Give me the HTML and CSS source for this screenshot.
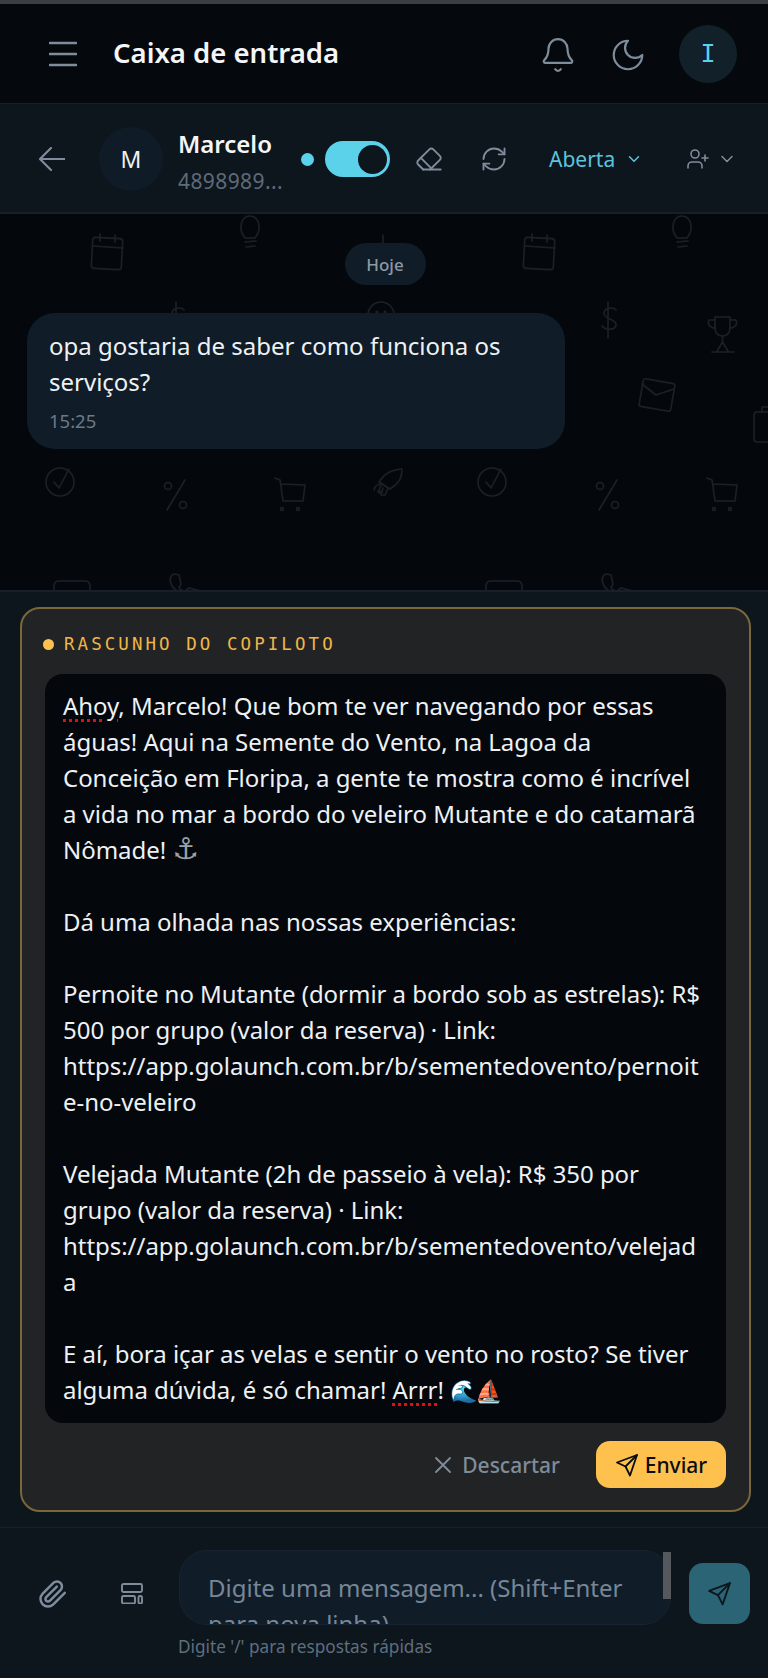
FILE: index.html
```
<!DOCTYPE html>
<html lang="pt-BR">
<head>
<meta charset="utf-8">
<title>Caixa de entrada</title>
<link rel="stylesheet" href="styles.css">
</head>
<body>
<div class="app">
  <header class="topbar">
    <div class="topbar-left">
      <svg class="ic-menu" viewBox="0 0 28 26" fill="none" stroke="currentColor" stroke-width="2.6" stroke-linecap="round"><path d="M1 2h26M1 13h26M1 24h26"/></svg>
      <h1 class="title">Caixa de entrada</h1>
    </div>
    <div class="topbar-right">
      <svg class="ic ic-36" viewBox="0 0 24 24"><path d="M10.268 21a2 2 0 0 0 3.464 0"/><path d="M3.262 15.326A1 1 0 0 0 4 17h16a1 1 0 0 0 .74-1.673C19.41 13.956 18 12.499 18 8A6 6 0 0 0 6 8c0 4.499-1.411 5.956-2.738 7.326"/></svg>
      <svg class="ic ic-36" viewBox="0 0 24 24"><path d="M12 3a6 6 0 0 0 9 9 9 9 0 1 1-9-9Z"/></svg>
      <div class="avatar-me">I</div>
    </div>
  </header>

  <section class="convbar">
    <svg class="ic ic-back" viewBox="0 0 26 24"><path d="M12 1 1 12l11 11M1 12h25"/></svg>
    <div class="avatar-contact">M</div>
    <div class="contact">
      <div class="contact-name">Marcelo</div>
      <div class="contact-phone">4898989...</div>
    </div>
    <span class="dot"></span>
    <span class="toggle"><span class="knob"></span></span>
    <svg class="ic ic-24 gap-eraser" viewBox="0 0 24 24"><path d="m7 21-4.3-4.3c-1-1-1-2.5 0-3.4l9.6-9.6c1-1 2.5-1 3.4 0l5.6 5.6c1 1 1 2.5 0 3.4L13 21"/><path d="M22 21H7"/><path d="m5 11 9 9"/></svg>
    <svg class="ic ic-24 gap-refresh" viewBox="0 0 24 24"><path d="M3 12a9 9 0 0 1 9-9 9.75 9.75 0 0 1 6.74 2.74L21 8"/><path d="M21 3v5h-5"/><path d="M21 12a9 9 0 0 1-9 9 9.75 9.75 0 0 1-6.74-2.74L3 16"/><path d="M8 16H3v5"/></svg>
    <span class="status">Aberta</span>
    <svg class="ic ic-chev-cyan" viewBox="0 0 24 24"><path d="m6 9 6 6 6-6"/></svg>
    <svg class="ic ic-user" viewBox="0 0 24 24"><path d="M16 21v-2a4 4 0 0 0-4-4H6a4 4 0 0 0-4 4v2"/><circle cx="9" cy="7" r="4"/><path d="M19 8v6"/><path d="M22 11h-6"/></svg>
    <svg class="ic ic-chev" viewBox="0 0 24 24"><path d="m6 9 6 6 6-6"/></svg>
  </section>

  <main class="chat">
    <svg class="chat-bg" width="768" height="376" aria-hidden="true">
      <defs>
        <pattern id="doodles" width="432" height="376" patternUnits="userSpaceOnUse">
          <g transform="translate(0,-214)" fill="none" stroke="#1b2027" stroke-width="1.6" stroke-linecap="round" stroke-linejoin="round">
            <g transform="translate(92,234)"><rect x="0" y="4" width="30" height="31" rx="3" transform="rotate(3 15 20)"/><path d="M1 12l30 2M8 0l0 7M23 1l0 7"/></g>
            <g transform="translate(240,214)"><path d="M5 24C-3 14 2 2 10 2s13 12 5 22zM5 28l11-1M6 33l9-1"/></g>
            <path d="M383 235v8"/>
            <g transform="translate(168,302)"><path d="M8 0v36M16 8c-2-3-11-3-12 3s13 6 12 12-11 5-14 1"/></g>
            <g transform="translate(368,302)"><circle cx="13" cy="13" r="13"/><circle cx="9" cy="10" r=".8"/><circle cx="17" cy="10" r=".8"/></g>
            <g transform="translate(274,317)"><path d="M9 0h15v10c0 6-3 9-7.500 9S9 16 9 10zM9 3H3c-2 4 1 8 6 8M24 3h6c2 4-1 8-6 8M16.500 19v6l-6 10h12l-6-10M6 35h22"/></g>
            <g transform="translate(209,381)"><rect x="0" y="0" width="32" height="28" rx="2" transform="rotate(10 16 14)"/><path d="M1 3l14 11 18-6"/></g>
            <g transform="translate(322,406)"><rect x="0" y="6" width="28" height="30" rx="3"/><path d="M8 6V1h12v5"/></g>
            <g transform="translate(46,467)"><circle cx="14" cy="15" r="14"/><path d="M8 15l5 6 10-19"/></g>
            <g transform="translate(164,480)"><path d="M3 30 21 0"/><circle cx="4" cy="6" r="3.500"/><circle cx="19" cy="25" r="3.500"/></g>
            <g transform="translate(274,478)"><path d="M1 0l5 2 3 21h20l2-16-24-1"/><circle cx="8" cy="31" r="1.500"/><circle cx="24" cy="31" r="1.500"/></g>
            <g transform="translate(373,468)"><path d="M6 14C12 5 18 2 29 1c0 10-4 15-12 20zM1 22c1-4 3-6 7-6M6 22l3-7-3 7c-2 2-1 3 2 3zM10 20l-2 7h4l3-7"/></g>
            <g transform="translate(54,581)"><path d="M0 30V5q0-5 5-5h26q5 0 5 5v25"/></g>
            <g transform="translate(169,573)"><path d="M5 1C1 2 0 8 3 13c2 3 5 5 8 7M5 1l5 1 2 9-2 4c2 2 4 3 6 3l4-3 12 3"/></g>
          </g>
        </pattern>
      </defs>
      <rect width="768" height="376" fill="url(#doodles)"/>
    </svg>
    <div class="day-row"><span class="day">Hoje</span></div>
    <div class="bubble">
      <p class="bubble-text">opa gostaria de saber como funciona os<br>serviços?</p>
      <div class="bubble-time">15:25</div>
    </div>
  </main>

  <section class="composer">
    <div class="draft">
      <div class="draft-head"><span class="draft-dot"></span><span class="draft-label">RASCUNHO DO COPILOTO</span></div>
      <div class="draft-text"><span class="misspelt">Ahoy</span>, Marcelo! Que bom te ver navegando por essas<br>águas! Aqui na Semente do Vento, na Lagoa da<br>Conceição em Floripa, a gente te mostra como é incrível<br>a vida no mar a bordo do veleiro Mutante e do catamarã<br>Nômade! <span class="anchor">⚓&#xFE0E;</span><br><br>Dá uma olhada nas nossas experiências:<br><br>Pernoite no Mutante (dormir a bordo sob as estrelas): R$<br>500 por grupo (valor da reserva) · Link:<br>https://app.golaunch.com.br/b/sementedovento/pernoit<br>e-no-veleiro<br><br>Velejada Mutante (2h de passeio à vela): R$ 350 por<br>grupo (valor da reserva) · Link:<br>https://app.golaunch.com.br/b/sementedovento/velejad<br>a<br><br>E aí, bora içar as velas e sentir o vento no rosto? Se tiver<br>alguma dúvida, é só chamar! <span class="misspelt">Arrr</span>! <span class="emoji">🌊⛵</span></div>
      <div class="draft-actions">
        <button class="btn-discard"><svg class="ic ic-x" viewBox="0 0 18 18"><path d="M2 2l14 14M16 2 2 16"/></svg>Descartar</button>
        <button class="btn-send"><svg class="ic ic-plane" viewBox="0 0 24 24"><path d="M22 2 2 9.500l8.500 4L15 22.500z"/><path d="M22 2 10.500 13.500"/></svg>Enviar</button>
      </div>
    </div>
  </section>

  <footer class="inputbar">
    <div class="input-row">
      <svg class="ic ic-clip" viewBox="0 0 24 24"><path d="m21.440 11.050-9.190 9.190a6 6 0 0 1-8.490-8.490l8.570-8.570A4 4 0 1 1 18 8.840l-8.590 8.570a2 2 0 0 1-2.830-2.830l8.490-8.480"/></svg>
      <svg class="ic ic-layout" viewBox="0 0 22 21"><rect x="1" y="1" width="20" height="8" rx="1.500"/><rect x="1" y="13" width="13" height="7.500" rx="1.500"/><rect x="17.500" y="13" width="3.500" height="7.500" rx="1.500"/></svg>
      <div class="input-wrap">
        <div class="input">Digite uma mensagem... (Shift+Enter<br>para nova linha)</div>
        <span class="scroll-thumb"></span>
      </div>
      <button class="btn-go"><svg class="ic ic-go" viewBox="0 0 24 24"><path d="M22 2 2 9.500l8.500 4L15 22.500z"/><path d="M22 2 10.500 13.500"/></svg></button>
    </div>
    <div class="hint">Digite '/' para respostas rápidas</div>
  </footer>
</div>
</body>
</html>
```
FILE: styles.css
```
* { box-sizing: border-box; }
html, body { margin: 0; padding: 0; background: #04080d; }
body { font-family: "Noto Sans", "Liberation Sans", sans-serif; color: #fff; }
.app { width: 768px; height: 1678px; display: flex; flex-direction: column; overflow: hidden; border-top: 4px solid #3b3e43; }

.ic { fill: none; stroke: currentColor; stroke-width: 1.7; stroke-linecap: round; stroke-linejoin: round; flex: none; color: #7f8c9b; display: block; }
.ic-36 { width: 38px; height: 38px; stroke-width: 1.4; margin-top: 2px; }
.ic-24 { width: 28px; height: 28px; stroke-width: 1.6; }

.topbar { height: 99px; flex: none; display: flex; align-items: center; justify-content: space-between; background: #05090e; padding: 0 31px 0 49px; }
.topbar-left { display: flex; align-items: center; gap: 36px; }
.ic-menu { width: 28px; height: 26px; color: #7f8c9b; display: block; }
.title { margin: -2px 0 0; font-size: 27.500px; font-weight: 600; line-height: 32px; color: #f4f6f8; white-space: nowrap; }
.topbar-right { display: flex; align-items: center; gap: 32px; }
.avatar-me { width: 58px; height: 58px; border-radius: 50%; background: #112029; color: #5cd2ea; display: flex; align-items: center; justify-content: center; font-family: "DejaVu Sans Mono", monospace; font-size: 25px; font-weight: 400; }

.convbar { height: 111px; flex: none; display: flex; align-items: center; background: #0d151d; border-top: 1px solid #171f29; border-bottom: 2px solid #171f29; padding: 2px 0 0 39px; }
.ic-back { width: 26px; height: 24px; stroke-width: 2.2; }
.avatar-contact { width: 64px; height: 64px; border-radius: 50%; background: #0f1b26; margin-left: 34px; display: flex; align-items: center; justify-content: center; font-size: 23px; flex: none; color: #eef1f4; }
.contact { width: 117px; margin: 10px 0 0 15px; flex: none; }
.contact-name { font-size: 24px; font-weight: 600; line-height: 34px; color: #f4f6f8; white-space: nowrap; }
.contact-phone { font-size: 21px; line-height: 40px; color: #5e6b79; white-space: nowrap; letter-spacing: .4px; }
.dot { width: 13px; height: 13px; border-radius: 50%; background: #5cd2ea; margin-left: 6px; flex: none; }
.toggle { width: 65px; height: 36px; border-radius: 18px; background: #5cd2ea; margin-left: 11px; flex: none; display: flex; align-items: center; justify-content: flex-end; padding-right: 3px; }
.knob { width: 29px; height: 29px; border-radius: 50%; background: #0d151d; display: block; }
.gap-eraser { margin-left: 25px; }
.gap-refresh { margin-left: 37px; }
.status { margin-left: 41px; color: #5cc3dc; font-size: 21px; line-height: 30px; }
.ic-chev-cyan { width: 18px; height: 18px; margin-left: 10px; color: #5cc3dc; stroke-width: 2; }
.ic-user { width: 24px; height: 24px; margin-left: 43px; stroke-width: 1.6; }
.ic-chev { width: 20px; height: 20px; margin-left: 7px; stroke-width: 1.9; }

.chat { height: 376px; flex: none; position: relative; background: #04080d; padding: 29px 27px 0; }
.chat-bg { position: absolute; left: 0; top: 0; display: block; }
.day-row { position: relative; display: flex; justify-content: center; padding-left: 2px; }
.day { width: 81px; height: 42px; border-radius: 21px; background: #101c27; color: #8b99a8; font-size: 17px; display: flex; align-items: center; justify-content: center; font-weight: 500; }
.bubble { position: relative; width: 538px; height: 136px; margin-top: 28px; border-radius: 28px; background: #101c27; padding: 15px 22px; }
.bubble-text { margin: 0; font-size: 24px; line-height: 36px; color: #eef1f4; white-space: nowrap; }
.bubble-time { font-size: 18.500px; line-height: 26px; margin-top: 8px; color: #6c7987; }

.composer { flex: none; background: #0d151d; border-top: 2px solid #171f29; padding: 15px 17px 15px 20px; }
.draft { height: 905px; border: 2px solid #7a673a; border-radius: 20px; background: #222324; padding: 20px 23px 0 23px; }
.draft-head { display: flex; align-items: center; height: 30px; }
.draft-dot { width: 11px; height: 11px; border-radius: 50%; background: #ffc14d; flex: none; margin-left: -2px; }
.draft-label { margin-left: 10px; font-family: "DejaVu Sans Mono", monospace; font-size: 17.500px; letter-spacing: 3.050px; color: #f0b648; white-space: nowrap; }
.draft-text { margin-top: 15px; height: 749px; border-radius: 18px; background: #04080d; padding: 14px 18px; font-size: 24px; line-height: 36px; letter-spacing: -.04px; color: #eef1f4; white-space: nowrap; overflow: hidden; }
.misspelt { text-decoration: underline dotted #e01010 2.500px; text-underline-offset: 4px; }
.anchor { color: #9ba1a8; font-family: "DejaVu Sans", sans-serif; font-size: 30px; line-height: 0; }
.emoji { font-size: 22px; letter-spacing: -2px; }
.draft-actions { display: flex; justify-content: flex-end; align-items: center; margin-top: 18px; gap: 36px; }
.btn-discard { background: none; border: 0; padding: 0; display: flex; align-items: center; gap: 10px; color: #7f8c9b; font: 500 21px "Noto Sans", sans-serif; }
.ic-x { width: 18px; height: 18px; color: #7f8c9b; stroke-width: 1.8; }
.btn-send { width: 130px; height: 47px; border: 0; border-radius: 14px; background: #ffc14d; display: flex; align-items: center; justify-content: center; gap: 6px; color: #0a0d10; font: 500 21px "Noto Sans", sans-serif; padding: 0; }
.ic-plane { width: 24px; height: 24px; color: #0a0d10; stroke-width: 1.8; }

.inputbar { flex: 1; background: #0d151d; border-top: 1px solid #171f29; padding-top: 22px; }
.input-row { display: flex; align-items: flex-start; }
.ic-clip { width: 30px; height: 30px; margin: 29px 0 0 38px; stroke-width: 2; }
.ic-layout { width: 22px; height: 21px; margin: 33px 0 0 53px; stroke-width: 1.9; }
.input-wrap { position: relative; width: 492px; height: 75px; margin-left: 36px; flex: none; }
.input { height: 75px; border: 1px solid #172330; border-radius: 28px; background: #101c27; padding: 19px 28px; font-size: 24px; line-height: 36px; color: #76879a; white-space: nowrap; overflow: hidden; }
.scroll-thumb { position: absolute; right: 0; top: 2px; width: 8px; height: 47px; background: #55595e; }
.btn-go { width: 61px; height: 61px; margin: 13px 0 0 18px; border: 0; border-radius: 14px; background: #2b6475; display: flex; align-items: center; justify-content: center; padding: 0; }
.ic-go { width: 25px; height: 25px; color: #0d151d; stroke-width: 1.8; }
.hint { margin: 10px 0 0 178px; font-size: 17.200px; line-height: 24px; color: #5f6e7d; }
```
